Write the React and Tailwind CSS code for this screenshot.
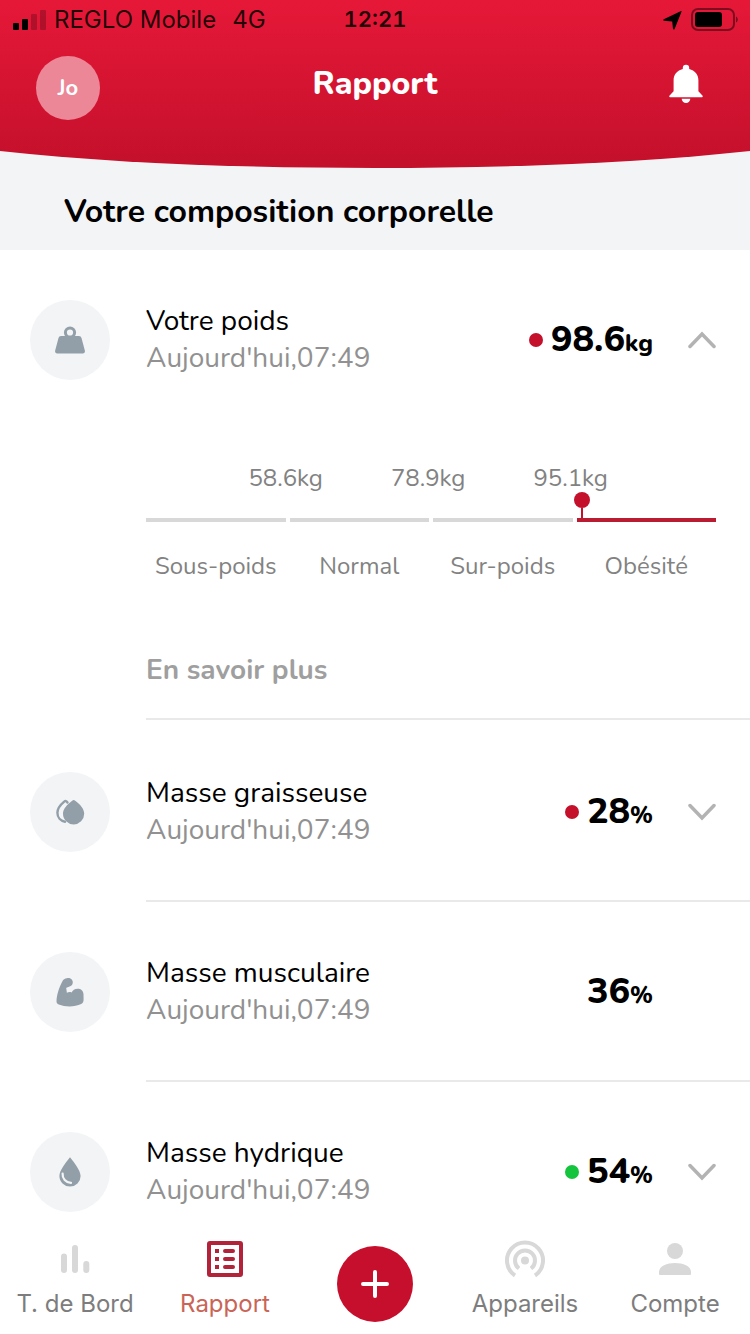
import React, { useState } from 'react'

const GREY = "#939fa8";

function WeightIcon() {
  return (
    <svg width="32" height="32" viewBox="0 0 32 32" aria-hidden="true">
      <circle cx="16" cy="8.5" r="4.6" fill="none" stroke={GREY} strokeWidth="3" />
      <path d="M7 12h18a2.6 2.6 0 0 1 2.5 2l3.4 12.8a2.2 2.2 0 0 1-2.2 2.7H3.3a2.2 2.2 0 0 1-2.2-2.7L4.500 14A2.600 2.600 0 0 1 7 12z" fill={GREY} />
    </svg>
  )
}

function FatIcon() {
  return (
    <svg width="32" height="32" viewBox="0 0 32 32" aria-hidden="true">
      <path d="M13.500 6.500c-1.200-1.700-2-1.900-3.300-.8C6 9.200 3.400 12.600 3.400 16.800c0 4.800 3.200 8.200 7.600 8.900" fill="none" stroke={GREY} strokeWidth="2.400" strokeLinecap="round" />
      <path d="M18.200 4.700c.9-.8 2-.8 3 0C26.500 9 30.200 12.400 30.200 17.800a10.600 10.600 0 0 1-21.200 0C9 12.400 13 9 18.200 4.700z" fill={GREY} />
    </svg>
  )
}

function MuscleIcon() {
  return (
    <svg width="32" height="32" viewBox="0 0 32 32" aria-hidden="true">
      <path d="M13 2.200c3.300-.6 5.900 1.600 5.800 4.300-.1 2.400-1.900 3.900-4.300 4.400-1.200.3-2 .6-2.300 1.200l.7 4.700c1.600-.8 3.100-.9 4.700-.3 1-2.400 3.200-3.800 6-3.800 3.400 0 5.800 2 5.900 5.600l.1 4.900c0 2.400-.7 4-2.400 4.900-6.400 3-15.700 3.200-22.400.4-1.500-.6-2.300-1.600-2.300-3.300C2.600 19.500 5 11.500 8.400 5.200 9.300 3.500 10.800 2.500 13 2.200z" fill={GREY} />
    </svg>
  )
}

function WaterIcon() {
  return (
    <svg width="32" height="32" viewBox="0 0 32 32" aria-hidden="true">
      <path d="M16 1.200C11.500 7 5.400 14.500 5.400 20a10.600 10.600 0 0 0 21.200 0C26.600 14.500 20.500 7 16 1.200z" fill={GREY} />
      <path d="M8.600 17.500c-.4 5 3.200 9.200 8.400 9.400" fill="none" stroke="#f3f4f5" strokeWidth="2.200" strokeLinecap="round" />
    </svg>
  )
}

function Chevron({ up }) {
  return (
    <svg width="28" height="18" viewBox="0 0 28 18" fill="none" stroke="#b3b3b3" strokeWidth="3.5" strokeLinecap="round" aria-hidden="true">
      <path d={up ? "M2 15.500 14 3l12 12.500" : "M2 2.500 14 15 26 2.500"} />
    </svg>
  )
}

const weightZones = ["Sous-poids", "Normal", "Sur-poids", "Obésité"];
const weightLimits = ["58.6kg", "78.9kg", "95.1kg"];

const measures = [
  { id: "weight", name: "Votre poids", value: "98.6", unit: "kg", dot: "bg-[#c5102b]", icon: WeightIcon, expandable: true },
  { id: "fat", name: "Masse graisseuse", value: "28", unit: "%", dot: "bg-[#c5102b]", icon: FatIcon, expandable: true },
  { id: "muscle", name: "Masse musculaire", value: "36", unit: "%", icon: MuscleIcon },
  { id: "water", name: "Masse hydrique", value: "54", unit: "%", dot: "bg-[#14c43c]", icon: WaterIcon, expandable: true },
];

function StatusBar() {
  return (
    <div className="grid h-10 grid-cols-[1fr_auto_1fr] items-center px-3 font-['Inter',sans-serif] text-2xl text-black/85">
      <div className="flex items-center gap-2 whitespace-nowrap">
        <svg className="shrink-0" width="34" height="22" viewBox="0 0 34 22" aria-hidden="true">
          <rect x="1" y="14" width="6" height="7" rx="1" fill="#000" />
          <rect x="10" y="10" width="6" height="11" rx="1" fill="#000" />
          <rect x="19" y="5" width="6" height="16" rx="1" fill="#000" opacity=".22" />
          <rect x="28" y="1" width="6" height="20" rx="1" fill="#000" opacity=".22" />
        </svg>
        <span>REGLO Mobile</span>
        <span className="pl-2">4G</span>
      </div>
      <span className="text-center text-[22px] font-semibold tabular-nums">12:21</span>
      <div className="flex items-center justify-end gap-2">
        <svg width="20" height="20" viewBox="0 0 20 20" aria-hidden="true">
          <path d="M19.500 1.800 12.600 19c-.3.800-1.500.7-1.600-.2L10.200 11.500 2 10.800c-.9-.1-1-1.200-.2-1.500L18.600 1.200c.7-.3 1.100-.1.900.6z" fill="#000" />
        </svg>
        <svg width="48" height="24" viewBox="0 0 48 24" aria-hidden="true">
          <rect x="2" y="1" width="42" height="21" rx="6" fill="none" stroke="#000" strokeOpacity=".45" strokeWidth="2" />
          <rect x="5" y="4" width="27" height="15" rx="3" fill="#000" />
          <path d="M46 8.500c2.400 1.200 2.400 5 0 6z" fill="#000" opacity=".45" />
        </svg>
      </div>
    </div>
  )
}

function Header() {
  return (
    <header className="relative isolate h-[168px] shrink-0 bg-[#f3f4f6]">
      <svg className="absolute inset-0 -z-10 h-full w-full" viewBox="0 0 750 168" preserveAspectRatio="none" aria-hidden="true">
        <defs>
          <linearGradient id="headerRed" x1="0" y1="0" x2="0" y2="1">
            <stop offset="0" stopColor="#e61838" />
            <stop offset="1" stopColor="#c3102b" />
          </linearGradient>
        </defs>
        <path d="M0 0h750v151C640 163 510 168 375 168S110 163 0 151z" fill="url(#headerRed)" />
      </svg>
      <StatusBar />
      <div className="grid grid-cols-3 items-center px-9 pt-4">
        <button className="h-16 w-16 rounded-full bg-[#eb8797] text-[22px] font-bold text-white">Jo</button>
        <h1 className="pb-2 text-center text-[32px] leading-10 font-extrabold text-white">Rapport</h1>
        <button className="justify-self-end pr-[11px] pb-2" aria-label="Notifications">
          <svg width="34" height="40" viewBox="0 0 34 42" preserveAspectRatio="none" fill="#fff" aria-hidden="true">
            <path d="M17 .8a3.200 3.200 0 0 1 3.200 3.200v1.200C25.800 6.600 29.400 11 29.400 17v11.500l4 4.500c.8 1 .3 2-.9 2h-31C.3 35-.2 34 .6 33l4-4.500V17c0-6 3.600-10.400 9.200-11.800V4A3.200 3.200 0 0 1 17 .8z" />
            <path d="M12.700 36.600h8.600a4.300 4.300 0 0 1-8.600 0z" />
          </svg>
        </button>
      </div>
    </header>
  )
}

function WeightDetails() {
  return (
    <div className="mb-[2px] ml-[146px] border-b-2 border-[#e9e9e9] pt-8 pb-7 text-[#828282]">
      <div className="mr-[34px] text-2xl leading-8">
        <div className="ml-[12%] grid w-3/4 grid-cols-3 text-center">
          {weightLimits.map((limit) => (
            <span key={limit}>{limit}</span>
          ))}
        </div>
        <div className="grid grid-cols-4 gap-1 pt-6">
          {weightZones.map((zone) => (
            <div key={zone} className={zone === "Obésité" ? "relative h-1 bg-[#b91c30]" : "h-1 bg-[#d8d8d8]"}>
              {zone === "Obésité" && (
                <div className="absolute bottom-1 -left-[3px] flex flex-col items-center">
                  <span className="h-4 w-4 rounded-full bg-[#c5102b]" />
                  <span className="h-[10px] w-[2px] bg-[#c5102b]" />
                </div>
              )}
            </div>
          ))}
        </div>
        <div className="grid grid-cols-4 gap-1 pt-7 text-center">
          {weightZones.map((zone) => (
            <span key={zone}>{zone}</span>
          ))}
        </div>
      </div>
      <a href="#weight" className="mt-[68px] block text-[28px] leading-10 font-bold text-[#9f9f9f]">En savoir plus</a>
    </div>
  )
}

function MeasureRow({ measure, open, onToggle }) {
  const Icon = measure.icon;

  return (
    <li>
      <div className="flex h-[180px]">
        <div className="flex w-[146px] items-center pl-[30px]">
          <div className="flex h-20 w-20 items-center justify-center rounded-full bg-[#f3f4f6]">
            <Icon />
          </div>
        </div>
        <div className={open ? "flex flex-1 items-center pr-[34px]" : "flex flex-1 items-center border-b-2 border-[#e9e9e9] pt-[2px] pr-[34px]"}>
          <div className="flex-1 text-[28px] leading-[37px]">
            <h3 className="text-black">{measure.name}</h3>
            <p className="text-[#919191]">Aujourd'hui,07:49</p>
          </div>
          <div className="flex items-center gap-2 font-extrabold text-black">
            {measure.dot && <span className={`h-[14px] w-[14px] rounded-full ${measure.dot}`} />}
            <p className="text-4xl leading-none">
              {measure.value}<span className="text-2xl leading-none">{measure.unit}</span>
            </p>
          </div>
          <div className="flex w-[63px] justify-end">
            {measure.expandable && (
              <button onClick={onToggle} aria-expanded={open} aria-label={measure.name}>
                <Chevron up={open} />
              </button>
            )}
          </div>
        </div>
      </div>
      {open && measure.id === "weight" && <WeightDetails />}
    </li>
  )
}

function NavItem({ label, active, children }) {
  return (
    <a href="#" className={active ? "flex flex-col items-center gap-2 text-[#c96456]" : "flex flex-col items-center gap-2 text-[#7d7d7d]"}>
      {children}
      <span>{label}</span>
    </a>
  )
}

function BottomNav() {
  return (
    <nav className="grid h-[104px] shrink-0 grid-cols-5 bg-white pt-2 font-['Inter',sans-serif] text-2xl leading-8">
      <NavItem label="T. de Bord">
        <svg width="42" height="42" viewBox="0 0 42 42" stroke="#d8d8d8" strokeWidth="6" strokeLinecap="round" aria-hidden="true">
          <path d="M10 18.500V32M21 10v22M32.300 26v6" />
        </svg>
      </NavItem>
      <NavItem label="Rapport" active>
        <svg width="42" height="42" viewBox="0 0 42 42" fill="none" stroke="#b22238" strokeWidth="4" aria-hidden="true">
          <rect x="5" y="5" width="32" height="32" rx="1" />
          <path d="M11 13h4M11 21h4M11 29h4" />
          <path d="M21 13h8M21 21h8M21 29h8" strokeLinecap="round" />
        </svg>
      </NavItem>
      <div className="flex justify-center pt-2">
        <button className="flex h-[76px] w-[76px] items-center justify-center rounded-full bg-[#c60f2c]" aria-label="Ajouter">
          <svg width="30" height="30" viewBox="0 0 30 30" stroke="#fff" strokeWidth="4" strokeLinecap="round" aria-hidden="true">
            <path d="M15 3v24M3 15h24" />
          </svg>
        </button>
      </div>
      <NavItem label="Appareils">
        <svg width="42" height="42" viewBox="0 0 42 42" fill="none" stroke="#d8d8d8" strokeWidth="4" aria-hidden="true">
          <circle cx="21" cy="22.500" r="4" fill="#d8d8d8" stroke="none" />
          <path d="M15 30.500a10 10 0 1 1 12 0" />
          <path d="M11 37.500a18 18 0 1 1 20 0" />
        </svg>
      </NavItem>
      <NavItem label="Compte">
        <svg width="42" height="42" viewBox="0 0 42 42" fill="#d8d8d8" aria-hidden="true">
          <circle cx="21" cy="13" r="8" />
          <path d="M5 34c0-6 8-9 16-9s16 3 16 9v2a1 1 0 0 1-1 1H6a1 1 0 0 1-1-1z" />
        </svg>
      </NavItem>
    </nav>
  )
}

function App() {
  const [openId, setOpenId] = useState("weight");

  return (
    <div className="flex h-screen flex-col bg-white font-['Nunito','Lato',sans-serif]">
      <Header />
      <main className="min-h-0 flex-1 overflow-y-auto [scrollbar-width:none]">
        <h2 className="bg-[#f3f4f6] px-16 pt-6 pb-[18px] text-[32px] leading-10 font-bold text-black">Votre composition corporelle</h2>
        <ul>
          {measures.map((measure) => (
            <MeasureRow
              key={measure.id}
              measure={measure}
              open={openId === measure.id}
              onToggle={() => setOpenId(openId === measure.id ? null : measure.id)}
            />
          ))}
        </ul>
      </main>
      <BottomNav />
    </div>
  )
}

export default App
